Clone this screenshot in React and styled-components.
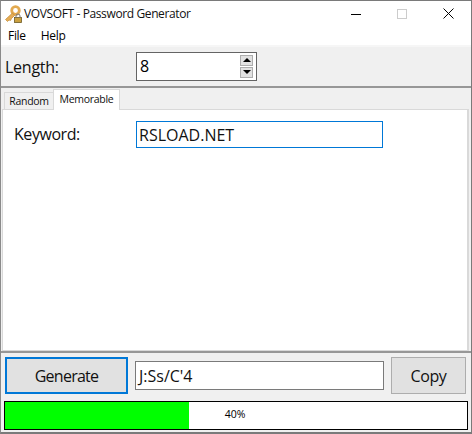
import React from "react";
import styled, { createGlobalStyle } from "styled-components";

const Global = createGlobalStyle`
  html, body { margin: 0; padding: 0; background: #fff; }
  body { font-family: "Open Sans", "Noto Sans", "Liberation Sans", sans-serif; color: #000; }
`;
const Win = styled.div`
  width: 472px; height: 434px; box-sizing: border-box; display: flex; flex-direction: column;
  border: 1px solid #7a7a7a; border-bottom-width: 2px; border-left-color:#8a8a8a; background: #fff; overflow: hidden;
`;
const TitleBar = styled.div`
  height: 25px; flex: none; display: flex; align-items: center; padding: 0 0 0 3px; box-sizing: border-box;
`;
const AppIcon = styled.svg`width: 18px; height: 18px; flex: none; margin-right: 2px;`;
const TitleText = styled.div`font-size: 12px; letter-spacing: -0.38px; flex: 1; color: #111; white-space: nowrap;`;
const Caption = styled.button`
  width: 46px; height: 24px; border: 0; background: none; padding: 0; display: flex; align-items: center; justify-content: center;
`;
const Menu = styled.div`
  height: 18px; flex: none; display: flex; gap: 15px; padding: 0 0 0 7px; align-items: center; font-size: 12px; letter-spacing: -0.3px;
`;
const Top = styled.div`
  margin-top: 1px; flex: none; background: #f0f0f0; border-top: 2px solid #f6f6f6; border-bottom: 2px solid #979797;
  display: flex; align-items: center; padding-left: 4px; height: 39px;
`;
const Label = styled.div`font-size: 16px; letter-spacing: -0.25px; width: ${p => p.$w}px; flex: none; color: #111;`;
const Spin = styled.div`
  width: 121px; height: 29px; box-sizing: border-box; border: 1px solid #646464; background: #fff; display: flex; align-items: center;
  font-size: 16px; padding-left: 3px; justify-content: space-between; padding-right: 3px; margin-top: -1px;
`;
const Arrows = styled.div`display: flex; flex-direction: column; gap: 1px;`;
const Arrow = styled.div`
  width: 13px; height: 11px; box-sizing: border-box; background: #e1e1e1; border: 1px solid #adadad; display: flex; align-items: center; justify-content: center;
  &::after { content: ""; border-left: 4px solid transparent; border-right: 4px solid transparent;
    ${p => p.$down ? "border-top: 4px solid #000;" : "border-bottom: 4px solid #000;"} }
`;
const Tabs = styled.div`flex: 1; background: #f0f0f0; display: flex; flex-direction: column; padding: 1px 2px 0 1px; min-height: 0;`;
const TabRow = styled.div`display: flex; height: 20px; flex: none; align-items: flex-end;`;
const Tab = styled.div`
  box-sizing: border-box; font-size: 10.5px; letter-spacing: -0.28px; display: flex; align-items: center; justify-content: center; color: #111;
  border: 1px solid #d9d9d9; margin-bottom: -1px; position: relative;
  ${p => p.$on ? "background:#fff; border-bottom:0; height:21px; width:67px; margin-left:-1px; z-index:1; padding-bottom:3px;"
    : "background:#f0f0f0; height:18px; width:50px; margin-left:2px;"}
`;
const Page = styled.div`
  flex: 1; background: #fff; border: 1px solid #d9d9d9; border-right-width: 2px; padding: 11px 0 0 11px; display: flex; align-items: flex-start; box-sizing: border-box;
`;
const KeyLabel = styled(Label)`padding-top: 2px; letter-spacing: -0.45px;`;
const KeyInput = styled.div`
  width: 247px; height: 27px; box-sizing: border-box; border: 1px solid #0078d7; font-size: 16px; display: flex; align-items: center; padding-left: 2px; color: #111;
`;
const Bottom = styled.div`
  flex: none; height: 81px; border-top: 2px solid #979797; background: #f0f0f0; box-sizing: border-box; padding: 4px 4px 0 3px; display: flex; flex-direction: column; gap: 7px;
`;
const BtnRow = styled.div`display: flex; align-items: center; height: 37px; flex: none; padding-left: 1px;`;
const Btn = styled.div`
  box-sizing: border-box; height: 37px; width: ${p => p.$w}px; flex: none; background: #e1e1e1; display: flex; align-items: center; justify-content: center; font-size: 16px; letter-spacing: ${p => p.$ls}px; color: #111;
  border: ${p => p.$focus ? "2px solid #0078d7" : "1px solid #adadad"};
`;
const Output = styled.div`
  box-sizing: border-box; margin: 0 7px; flex: none; width: 249px; height: 29px; background: #fff; border: 1px solid #7a7a7a; font-size: 16px; display: flex; align-items: center; padding-left: 3px; color: #111;
`;
const Progress = styled.div`
  box-sizing: border-box; height: 29px; flex: none; width: 464px; border: 1px solid #000; background: #fff; position: relative; display: flex; align-items: center; justify-content: center; font-size: 10.5px; padding-bottom: 3px;
`;
const Fill = styled.div`position: absolute; left: 0; top: 0; bottom: 0; background: #00ff00;`;
const Pct = styled.span`position: relative; right: 1px;`;

export default function App() {
  const percent = 40;
  return (
    <Win>
      <Global />
      <TitleBar>
        <AppIcon viewBox="0 0 18 18">
          <circle cx="11.5" cy="5.5" r="3.8" fill="none" stroke="#e2a94f" strokeWidth="2.8" />
          <path d="M8.5 8 L1.5 14.5 L3.5 16.5 L5 15 L6.5 15.5 L7.5 13.5 L10.5 10.5 Z" fill="#e6ad55" stroke="#c08a35" strokeWidth="0.7" />
          <rect x="10.5" y="12.5" width="7" height="5" fill="#caa03f" stroke="#6d5a25" strokeWidth="0.8" />
          <path d="M12 12.5 V11 a2 2 0 0 1 4 0 V12.5" fill="none" stroke="#777" strokeWidth="1" />
        </AppIcon>
        <TitleText>VOVSOFT - Password Generator</TitleText>
        <Caption aria-label="Minimize"><svg width="10" height="10"><rect x="0" y="5" width="10" height="1" fill="#000" /></svg></Caption>
        <Caption aria-label="Maximize"><svg width="10" height="10"><rect x="0.5" y="0.5" width="9" height="9" fill="none" stroke="#ccc" /></svg></Caption>
        <Caption aria-label="Close"><svg width="11" height="11"><path d="M0.5 0.5 L10.5 10.5 M10.5 0.5 L0.5 10.5" stroke="#000" fill="none" /></svg></Caption>
      </TitleBar>
      <Menu><span>File</span><span>Help</span></Menu>
      <Top>
        <Label $w={131}>Length:</Label>
        <Spin>8<Arrows><Arrow /><Arrow $down /></Arrows></Spin>
      </Top>
      <Tabs>
        <TabRow><Tab>Random</Tab><Tab $on>Memorable</Tab></TabRow>
        <Page>
          <KeyLabel $w={122}>Keyword:</KeyLabel>
          <KeyInput>RSLOAD.NET</KeyInput>
        </Page>
      </Tabs>
      <Bottom>
        <BtnRow>
          <Btn $w={123} $focus $ls={-0.75}>Generate</Btn>
          <Output>J:Ss/C'4</Output>
          <Btn $w={75} $ls={-0.4}>Copy</Btn>
        </BtnRow>
        <Progress>
          <Fill style={{ width: `${percent * 4.6}px` }} />
          <Pct>{percent}%</Pct>
        </Progress>
      </Bottom>
    </Win>
  );
}
